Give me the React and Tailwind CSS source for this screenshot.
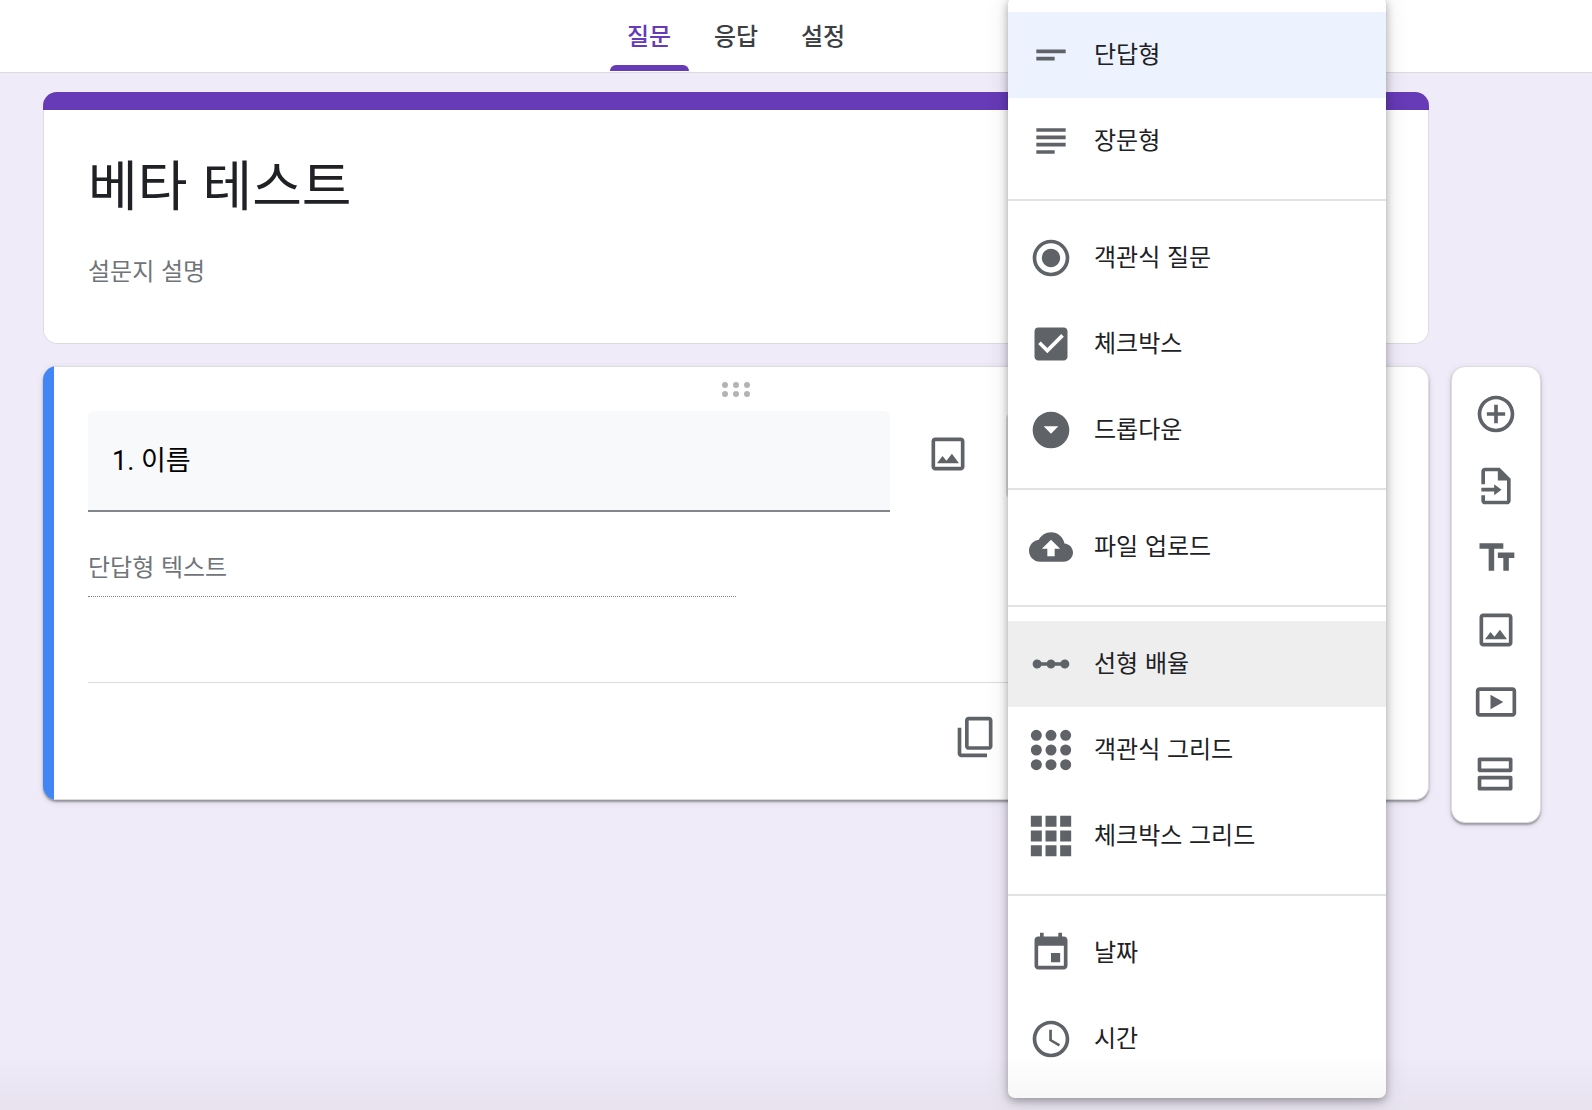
import { useState } from 'react';

const TABS = ['질문', '응답', '설정'];

// 24x24 icon paths
const ICONS = {
  shortText: 'M4 9h16v2H4V9zm0 4h10v2H4v-2z',
  longText: 'M4 5h16v2H4V5zm0 4h16v2H4V9zm0 4h16v2H4v-2zm0 4h10v2H4v-2z',
  radio:
    'M12 7c-2.76 0-5 2.24-5 5s2.24 5 5 5 5-2.24 5-5-2.24-5-5-5zm0-5C6.48 2 2 6.48 2 12s4.48 10 10 10 10-4.48 10-10S17.52 2 12 2zm0 18c-4.42 0-8-3.58-8-8s3.58-8 8-8 8 3.58 8 8-3.58 8-8 8z',
  checkbox:
    'M19 3H5c-1.11 0-2 .9-2 2v14c0 1.1.89 2 2 2h14c1.11 0 2-.9 2-2V5c0-1.1-.89-2-2-2zm-9 14l-5-5 1.41-1.41L10 14.17l7.59-7.59L19 8l-9 9z',
  dropdown: 'M12 2C6.48 2 2 6.48 2 12s4.48 10 10 10 10-4.48 10-10S17.52 2 12 2zm0 12l-4-4h8l-4 4z',
  upload:
    'M19.35 10.04C18.67 6.59 15.64 4 12 4 9.11 4 6.6 5.64 5.35 8.04 2.34 8.36 0 10.91 0 14c0 3.31 2.69 6 6 6h13c2.76 0 5-2.24 5-5 0-2.64-2.05-4.78-4.65-4.96zM14 13v4h-4v-4H7l5-5 5 5h-3z',
  scale:
    'M19.5 9.5c-1.03 0-1.9.62-2.29 1.5h-2.92c-.39-.88-1.26-1.5-2.29-1.5s-1.9.62-2.29 1.5H6.79c-.39-.88-1.26-1.5-2.29-1.5C3.12 9.5 2 10.62 2 12s1.12 2.5 2.5 2.5c1.03 0 1.9-.62 2.29-1.5h2.92c.39.88 1.26 1.5 2.29 1.5s1.9-.62 2.29-1.5h2.92c.39.88 1.26 1.5 2.29 1.5 1.38 0 2.5-1.12 2.5-2.5s-1.12-2.5-2.5-2.5z',
  radioGrid:
    'M1 4a3 3 0 1 0 6 0a3 3 0 1 0-6 0zM9 4a3 3 0 1 0 6 0a3 3 0 1 0-6 0zM17 4a3 3 0 1 0 6 0a3 3 0 1 0-6 0zM1 12a3 3 0 1 0 6 0a3 3 0 1 0-6 0zM9 12a3 3 0 1 0 6 0a3 3 0 1 0-6 0zM17 12a3 3 0 1 0 6 0a3 3 0 1 0-6 0zM1 20a3 3 0 1 0 6 0a3 3 0 1 0-6 0zM9 20a3 3 0 1 0 6 0a3 3 0 1 0-6 0zM17 20a3 3 0 1 0 6 0a3 3 0 1 0-6 0z',
  checkGrid:
    'M1 1h6v6H1zM9 1h6v6H9zM17 1h6v6h-6zM1 9h6v6H1zM9 9h6v6H9zM17 9h6v6h-6zM1 17h6v6H1zM9 17h6v6H9zM17 17h6v6h-6z',
  date: 'M17 12h-5v5h5v-5zM16 1v2H8V1H6v2H5c-1.11 0-1.99.9-1.99 2L3 19c0 1.1.89 2 2 2h14c1.1 0 2-.9 2-2V5c0-1.1-.9-2-2-2h-1V1h-2zm3 18H5V8h14v11z',
  time: 'M11.99 2C6.47 2 2 6.48 2 12s4.47 10 9.99 10C17.52 22 22 17.52 22 12S17.52 2 11.99 2zM12 20c-4.42 0-8-3.58-8-8s3.58-8 8-8 8 3.58 8 8-3.58 8-8 8zm.5-13H11v6l5.25 3.15.75-1.23-4.5-2.67V7z',
  add: 'M13 7h-2v4H7v2h4v4h2v-4h4v-2h-4V7zm-1-5C6.48 2 2 6.48 2 12s4.48 10 10 10 10-4.48 10-10S17.52 2 12 2zm0 18c-4.41 0-8-3.59-8-8s3.59-8 8-8 8 3.59 8 8-3.59 8-8 8z',
  importFile:
    'M14 2H6c-1.1 0-2 .9-2 2v7h2V4h7v5h5v11H6v-3H4v3c0 1.1.9 2 2 2h12c1.1 0 2-.9 2-2V8l-6-6zM4 13v2h7v2l4-3-4-3v2H4z',
  title: 'M3 4v3h5v12h3V7h5V4H3zm19 5h-9v3h3v7h3v-7h3V9z',
  image:
    'M19 5v14H5V5h14m0-2H5c-1.1 0-2 .9-2 2v14c0 1.1.9 2 2 2h14c1.1 0 2-.9 2-2V5c0-1.1-.9-2-2-2zm-4.86 8.86l-3 3.87L9 13.14 6 17h12l-3.86-5.14z',
  video:
    'M21 4H3c-1.1 0-2 .9-2 2v12c0 1.1.9 2 2 2h18c1.1 0 2-.9 2-2V6c0-1.1-.9-2-2-2zm0 14H3V6h18v12zM9 8v8l7-4-7-4z',
  section:
    'M20 3H3c-.55 0-1 .45-1 1v6c0 .55.45 1 1 1h17c.55 0 1-.45 1-1V4c0-.55-.45-1-1-1zm-1 6H4V5h15v4zm1 4H3c-.55 0-1 .45-1 1v6c0 .55.45 1 1 1h17c.55 0 1-.45 1-1v-6c0-.55-.45-1-1-1zm-1 6H4v-4h15v4z',
  copy: 'M19 1H8c-1.1 0-2 .9-2 2v14c0 1.1.9 2 2 2h11c1.1 0 2-.9 2-2V3c0-1.1-.9-2-2-2zm0 16H8V3h11v14zM4 7H2v14c0 1.1.9 2 2 2h14v-2H4V7z',
};

const MENU_GROUPS = [
  [
    { label: '단답형', icon: 'shortText' },
    { label: '장문형', icon: 'longText' },
  ],
  [
    { label: '객관식 질문', icon: 'radio' },
    { label: '체크박스', icon: 'checkbox' },
    { label: '드롭다운', icon: 'dropdown' },
  ],
  [{ label: '파일 업로드', icon: 'upload' }],
  [
    { label: '선형 배율', icon: 'scale', hovered: true },
    { label: '객관식 그리드', icon: 'radioGrid' },
    { label: '체크박스 그리드', icon: 'checkGrid' },
  ],
  [
    { label: '날짜', icon: 'date' },
    { label: '시간', icon: 'time' },
  ],
];

const TOOLS = [
  { label: '질문 추가', icon: 'add' },
  { label: '질문 가져오기', icon: 'importFile' },
  { label: '제목 및 설명 추가', icon: 'title' },
  { label: '이미지 추가', icon: 'image' },
  { label: '동영상 추가', icon: 'video' },
  { label: '섹션 추가', icon: 'section' },
];

function Icon({ name }) {
  return (
    <svg viewBox="0 0 24 24" className="size-11 shrink-0 fill-[#5f6368]" aria-hidden="true">
      <path d={ICONS[name]} />
    </svg>
  );
}

function Header() {
  const [active, setActive] = useState('질문');

  return (
    <header className="border-b border-[#dadce0] bg-white pr-[120px]">
      <nav className="flex h-18 justify-center gap-2">
        {TABS.map((tab) => (
          <button
            key={tab}
            type="button"
            onClick={() => setActive(tab)}
            className={`flex w-[79px] flex-col items-center justify-between text-2xl font-medium ${
              tab === active ? 'text-[#673ab7]' : 'text-[#3c4043]'
            }`}
          >
            <span className="pt-[19px] leading-8">{tab}</span>
            {tab === active && <span className="mb-px h-1.5 w-full rounded-t-md bg-[#673ab7]" />}
          </button>
        ))}
      </nav>
    </header>
  );
}

function TitleCard() {
  return (
    <section className="overflow-hidden rounded-[14px]">
      <div className="h-[18px] bg-[#673ab7]" />
      <div className="rounded-b-[14px] border border-t-0 border-[#dadce0] bg-white px-11 pt-8 pb-14">
        <input
          aria-label="설문지 제목"
          defaultValue="베타 테스트"
          className="block h-20 w-full text-[54px] text-[#202124] outline-none"
        />
        <input
          aria-label="설문지 설명"
          placeholder="설문지 설명"
          className="mt-[29px] block h-9 w-full text-2xl outline-none placeholder:text-[#70757a]"
        />
      </div>
    </section>
  );
}

function DragHandle() {
  return (
    <svg viewBox="0 0 28 16" className="mx-auto h-4 w-7 fill-[#b3b3b3]" aria-hidden="true">
      {[3, 14, 25].map((x) => (
        <g key={x}>
          <circle cx={x} cy="3" r="3" />
          <circle cx={x} cy="12" r="3" />
        </g>
      ))}
    </svg>
  );
}

function QuestionCard() {
  return (
    <section className="flex overflow-hidden rounded-[14px] shadow-[0_2px_2px_rgba(60,64,67,0.45),0_2px_6px_rgba(60,64,67,0.15)]">
      <div className="w-[11px] bg-[#4285f4]" />
      <div className="flex-1 rounded-r-[14px] border border-l-0 border-[#dadce0] bg-white pt-[15px] pr-11 pl-[34px]">
        <DragHandle />
        <div className="mt-[13px] flex items-start">
          <input
            aria-label="질문"
            defaultValue="1. 이름"
            className="h-[101px] min-w-0 flex-1 rounded-t-md border-b-2 border-[#80868b] bg-[#f8f9fb] px-6 pb-1 font-[Roboto,'Noto_Sans_CJK_KR',sans-serif] text-[27px] text-black outline-none"
          />
          <button type="button" aria-label="이미지 추가" className="mx-9 mt-[21px]">
            <Icon name="image" />
          </button>
          <select
            aria-label="질문 유형"
            className="mt-0.5 h-[86px] w-[378px] appearance-none rounded-md border-2 border-[#dadce0] px-5 text-2xl"
          >
            <option>단답형</option>
          </select>
        </div>
        <input
          aria-label="단답형 텍스트"
          placeholder="단답형 텍스트"
          disabled
          className="mt-[26px] block h-[59px] w-1/2 border-b border-dotted border-[#80868b] pb-1 text-2xl placeholder:text-[#70757a]"
        />
        <div className="mt-[85px] flex justify-end border-t border-[#dadce0] pt-8 pr-[386px] pb-10">
          <button type="button" aria-label="복사">
            <Icon name="copy" />
          </button>
        </div>
      </div>
    </section>
  );
}

function Toolbar() {
  return (
    <aside className="flex flex-col rounded-[14px] border border-[#dadce0] bg-white pt-[11px] pb-3 shadow-[0_2px_2px_rgba(60,64,67,0.4),0_2px_6px_rgba(60,64,67,0.15)]">
      {TOOLS.map((tool) => (
        <button
          key={tool.icon}
          type="button"
          aria-label={tool.label}
          className="flex h-18 items-center justify-center"
        >
          <Icon name={tool.icon} />
        </button>
      ))}
    </aside>
  );
}

function TypeMenu() {
  const [selected, setSelected] = useState('단답형');

  const itemColor = (item) => {
    if (item.label === selected) return 'bg-[#ecf3fe]';
    if (item.hovered) return 'bg-[#eeeeee]';
    return 'hover:bg-[#eeeeee]';
  };

  return (
    <div
      role="listbox"
      aria-label="질문 유형"
      className="absolute -top-[3px] right-[206px] w-[378px] rounded-[7px] bg-white pb-px shadow-[0_3px_8px_rgba(0,0,0,0.3),0_1px_24px_rgba(0,0,0,0.12)]"
    >
      {MENU_GROUPS.map((group, i) => (
        <div key={i} className={`pb-[15px] ${i > 0 ? 'border-t-2 border-[#e0e2e3] pt-3.5' : 'pt-[15px]'}`}>
          {group.map((item) => (
            <button
              key={item.label}
              type="button"
              role="option"
              aria-selected={item.label === selected}
              onClick={() => setSelected(item.label)}
              className={`flex h-[86px] w-full items-center gap-[21px] pl-[21px] text-2xl text-[#202124] ${itemColor(item)}`}
            >
              <Icon name={item.icon} />
              <span className="pb-1">{item.label}</span>
            </button>
          ))}
        </div>
      ))}
    </div>
  );
}

export default function App() {
  return (
    <div
      lang="ko"
      className="relative min-h-screen overflow-hidden bg-[#f0ebf8] font-['Noto_Sans_CJK_KR',sans-serif]"
    >
      <Header />
      <main className="grid grid-cols-[1fr_90px] items-start gap-x-[22px] gap-y-[22px] pt-[19px] pr-[51px] pl-[43px]">
        <div className="col-span-2 grid grid-cols-subgrid">
          <TitleCard />
        </div>
        <QuestionCard />
        <Toolbar />
      </main>
      <TypeMenu />
      {/* soft fade along the bottom edge */}
      <div className="pointer-events-none absolute inset-x-0 bottom-0 h-14 bg-linear-to-t from-black/4 to-transparent" />
    </div>
  );
}
